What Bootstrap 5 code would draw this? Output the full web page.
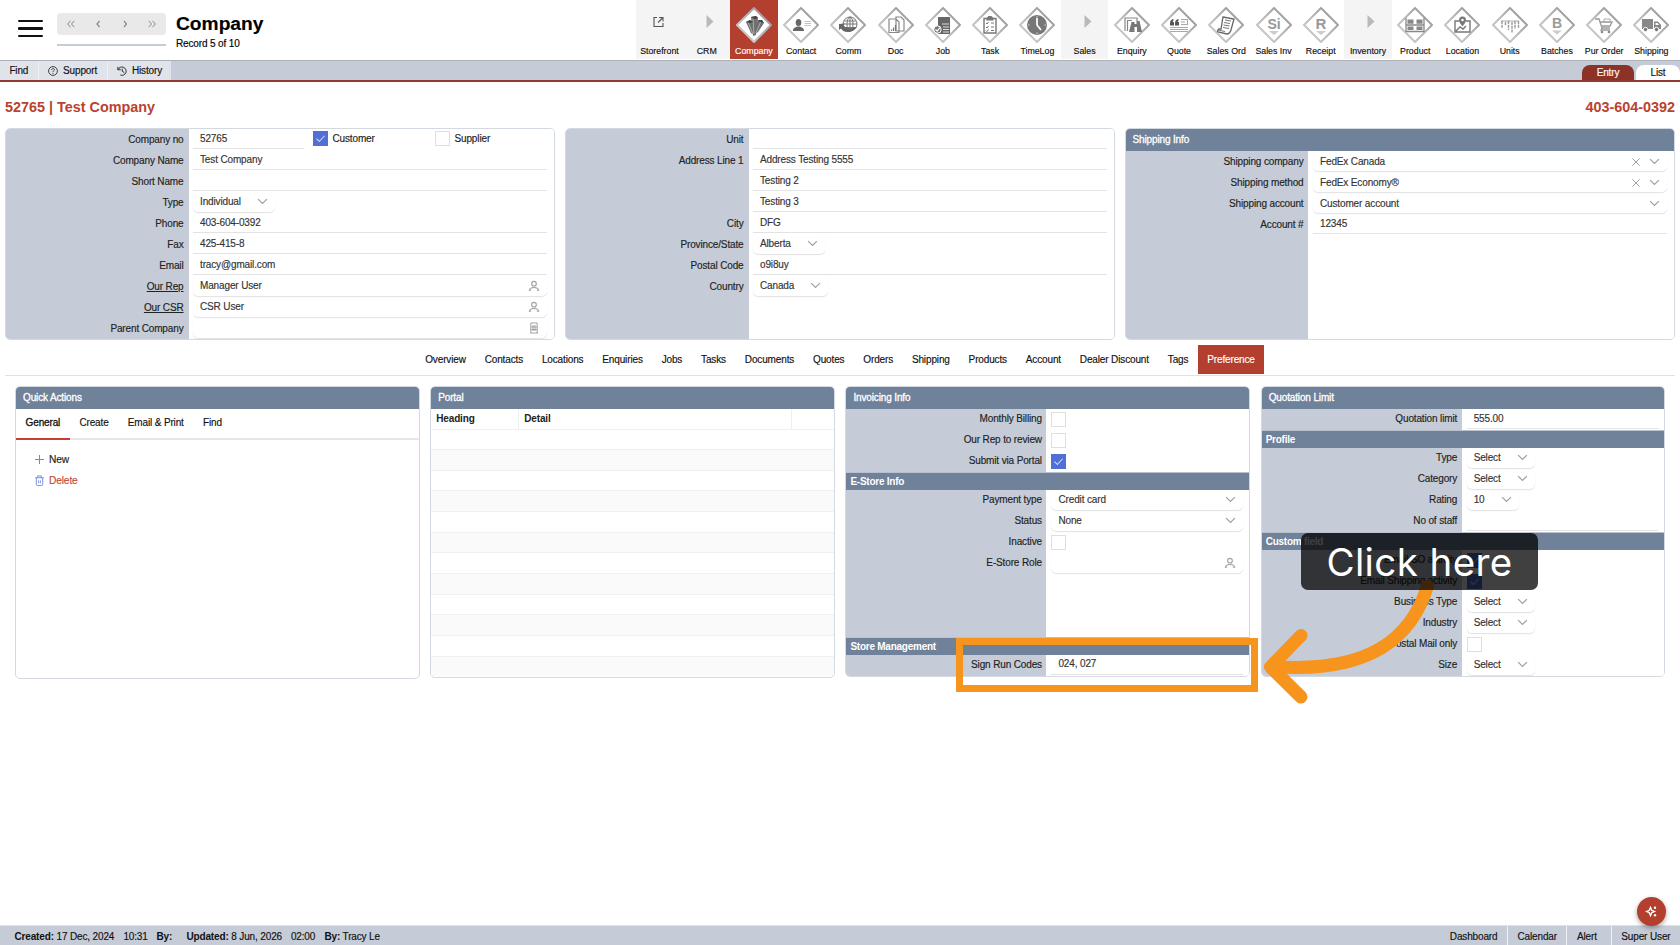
<!DOCTYPE html>
<html lang="en">
<head>
  <meta charset="UTF-8">
  <meta name="viewport" content="width=device-width, initial-scale=1">
  <title>Company - Test Company</title>
  <link href="https://cdn.jsdelivr.net/npm/bootstrap@5.3.0/dist/css/bootstrap.min.css" rel="stylesheet">
  <style>
    body { font-family: "Liberation Sans", Arial, sans-serif; font-size: 10px; line-height: 12px; letter-spacing: -.14px; color: #222; background: #fff; height: 945px; overflow: hidden; -webkit-text-stroke: .15px; }
    svg { display: block; flex: none; }
    a { color: inherit; text-decoration: none; }

    /* header */
    .topbar { height: 60px; padding-right: 5px; }
    .burger { width: 25px; height: 17px; margin: 20px 14px 0 18px; }
    .burger span { display: block; height: 2.4px; border-radius: 1px; background: #111; }
    .pager { width: 109px; margin-top: 13px; border-bottom: 2px solid #c5ccd7; height: 33px; }
    .pager div { height: 22px; background: #e9e9e9; border-radius: 4px; color: #888; }
    .page-name { margin: 12px 0 0 10px; color: #000; }
    .page-name h1 { font-size: 19.2px; line-height: 24px; font-weight: 700; letter-spacing: 0; margin: 0; }
    .page-name div { margin-top: 2px; }
    .mod { width: 47.24px; height: 59px; padding-top: 6px; font-size: 8.8px; letter-spacing: 0; color: #111; white-space: nowrap; }
    .mod span { line-height: 12px; padding-top: 1px; }
    .mod-group { background: #f4f4f4; }
    .mod-on { background: #b3402f; color: #fff; }
    .toolbar { height: 22px; background: #c5ccd7; border-top: 1px solid #adb0b5; border-bottom: 2px solid #913b2e; color: #111; }
    .tool { background: #e0e4ea; border-right: 1px solid #eef0f3; padding: 0 9.4px; gap: 5px; }
    .tool:last-child { border: 0; }
    .view-tab { width: 52px; height: 15px; border-radius: 8px 8px 0 0; background: #fff; margin-left: 2px; }
    .view-tab.on { background: #8d3226; color: #fff; }
    .view-tab.slim { width: 44px; }
    .record-title { height: 46px; padding: 3px 5px 0; font-size: 14.4px; line-height: 18px; font-weight: 700; letter-spacing: 0; color: #b9432f; -webkit-text-stroke: 0; }

    /* panels */
    .top-panels { padding: 0 5.5px 0 4.5px; gap: 10px; }
    .panel { flex: 1 1 0; min-width: 0; border: 1px solid #d3d9e1; border-radius: 5px; overflow: hidden; background: #fff; display: flex; flex-direction: column; }
    .top-panels .panel { height: 212px; --lw: 182.5px; }
    .bottom-panels { padding: 10px 14.5px 0 15px; gap: 10.4px; }
    .bottom-panels .panel { --lw: 200px; flex: 1 1 0; }
    .panel-head { height: 22px; flex: none; background: #70819a; color: #fff; padding: 5px 7px 0; -webkit-text-stroke: .3px #fff; margin: 0; font-size: 10px; line-height: 12px; font-weight: 400; }
    .section-head { height: 18px; flex: none; background: #70819a; color: #fff; font-weight: 700; padding: 3px 4px 0; border-top: 1px solid #b8c1cd; letter-spacing: -.25px; -webkit-text-stroke: 0; }
    .fields { background: linear-gradient(90deg, #c5ccd7 var(--lw), #fff var(--lw)); }
    .fields.grow { flex: 1 1 0; }
    .line { height: 21px; display: flex; }
    .line > label { width: var(--lw); text-align: right; padding: 5px 4.5px 0 0; flex: none; }
    .bottom-panels .line > label { padding-top: 4px; }
    .line > label.linked { text-decoration: underline; }
    .field { flex: 1; margin: 0 6.5px 1px 5px; border-bottom: 1px solid #e3e3e3; padding: 0 7px; display: flex; align-items: center; color: #333; padding-top: 1px; }
    .bottom-panels .field { padding-top: 0; padding-bottom: 1px; }
    .raise .field { padding-top: 0; padding-bottom: 0; }
    .raise .field.drop { padding-bottom: 1px; }
    .drop { border-radius: 5px; border-bottom: 0; box-shadow: 0 1px 1px rgba(0,0,0,.12); }
    .fit { flex: none; }
    .fit svg { margin-left: 16px; }
    .push { margin-left: auto; }
    .box { width: 15px; height: 15px; border: 1px solid #dfdfdf; background: #fff; margin: 3px 0 0 5px; flex: none; }
    .raise .box { margin-top: 2px; }
    .box.on { background: #5070d6; border-color: #5070d6; }
    .box.on::after { content: ""; display: block; width: 9px; height: 5px; margin: 3px 0 0 2px; border: solid #dfe6fb; border-width: 0 0 1px 1px; transform: rotate(-47deg) scale(.9); }
    .box-text { padding: 4px 0 0 4.5px; }
    .main-no { width: 111px; margin-right: 4px; }
    .customer-text { width: 107px; }

    .main-tabs { margin: 5px 5px 0; height: 31px; border-bottom: 1px solid #e2e2e2; color: #111; }
    .main-tabs a { height: 29px; line-height: 30px; padding: 0 9.45px; }
    .main-tabs a.on { background: #b3402f; color: #fff; }
    .qa-tabs { height: 31px; border-bottom: 2px solid #e6e6e6; color: #111; margin-bottom: 9px; }
    .qa-tabs a { height: 31px; padding: 8px 9.6px 0; }
    .qa-tabs a.on { border-bottom: 2px solid #c5402f; -webkit-text-stroke: .3px #111; }
    .qa-item { height: 21px; gap: 4px; padding-left: 18px; font-size: 10.2px; }
    .danger-text { color: #c24a3a; }
    .grid-row { height: 20.65px; border-top: 1px solid #f0f0f0; }
    .grid-row:nth-child(even) { background: #fafafa; }
    .grid-head { height: 19.5px; flex: none; font-weight: 700; color: #222; -webkit-text-stroke: 0; }
    .grid-head div { padding: 4px 5px 0; border-right: 1px solid #eee; }
    .col-heading { width: 88px; }
    .col-detail { width: 273px; }

    /* footer */
    .foot { height: 20px; background: #c5ccd7; border-top: 1px solid #dde1e7; color: #111; }
    .foot-info { padding: 5px 0 0 14.4px; }
    .foot-info b { -webkit-text-stroke: 0; }
    .foot-link { padding: 5px 9.5px 0 9.5px; border-left: 1px solid #eef0f3; }
    .bot-btn { right: 14px; bottom: 19px; width: 29px; height: 29px; border-radius: 50%; background: #b3402f; box-shadow: 0 2px 5px rgba(0,0,0,.35); z-index: 5; }

    /* tutorial overlay */
    .frame-mark { left: 956px; top: 637.5px; width: 302px; height: 54px; border: 7px solid #f7941d; z-index: 6; }
    .arrow-mark { left: 1238.5px; top: 569.5px; z-index: 6; }
    .hint { left: 1301px; top: 533px; width: 237px; height: 56.5px; border-radius: 7px; background: rgba(0,0,0,.75); color: #fff; font: 400 38.5px/58px Inter, sans-serif; letter-spacing: .4px; z-index: 7; white-space: nowrap; -webkit-text-stroke: 0; }
  </style>
</head>
<body class="d-flex flex-column position-relative">

<!-- Shared icons -->
<svg width="0" height="0" class="position-absolute">
  <defs>
    <linearGradient id="edge" x1="0" y1="1" x2="1" y2="0"><stop offset="0" stop-color="#d2d2d2"/><stop offset=".5" stop-color="#b8b8b8"/><stop offset="1" stop-color="#8c8c8c"/></linearGradient>
    <symbol id="down" viewBox="0 0 10 10"><path d="M1 2.800l4 4L9 2.800" fill="none" stroke="#a0a0a0" stroke-width="1.1"/></symbol>
    <symbol id="cross" viewBox="0 0 10 10"><path d="M1.300 1.300l7.400 7.400M8.700 1.300L1.300 8.700" fill="none" stroke="#a0a0a0" stroke-width="1"/></symbol>
    <symbol id="person" viewBox="0 0 12 12"><g fill="none" stroke="#a0a0a0" stroke-width="1.100"><circle cx="6" cy="3.700" r="2.300"/><path d="M1.200 10.800c.2-2.400 2-3.300 4.800-3.300s4.600.9 4.800 3.300M1 10.300h2.200M8.800 10.300H11"/></g></symbol>
    <symbol id="tower" viewBox="0 0 12 12"><path d="M2.800 11V1h6.400v10M2 11h8M5 3v6M7 3v6M3 5h6M3 7.500h6" fill="none" stroke="#999" stroke-width=".9"/></symbol>
  </defs>
</svg>

<!-- Header -->
<header class="topbar d-flex">
  <div class="burger d-flex flex-column justify-content-between"><span></span><span></span><span></span></div>
  <div class="pager">
    <div class="d-flex justify-content-around align-items-center">
      <svg width="10" height="10" viewBox="0 0 10 10" fill="none" stroke="#888"><path d="M4.500 1.800L1.700 5l2.800 3.200M8.300 1.800L5.500 5l2.800 3.200"/></svg>
      <svg width="10" height="10" viewBox="0 0 10 10" fill="none" stroke="#888" stroke-width="1.200"><path d="M6.500 2L4 5l2.500 3"/></svg>
      <svg width="10" height="10" viewBox="0 0 10 10" fill="none" stroke="#888" stroke-width="1.200"><path d="M4 2l2.500 3L4 8"/></svg>
      <svg width="10" height="10" viewBox="0 0 10 10" fill="none" stroke="#888"><path d="M1.700 1.800L4.500 5 1.700 8.200M5.500 1.800L8.300 5 5.500 8.200"/></svg>
    </div>
  </div>
  <div class="page-name"><h1>Company</h1><div>Record 5 of 10</div></div>
  <nav class="d-flex ms-auto" id="modules"></nav>
</header>

<!-- Toolbar -->
<div class="toolbar d-flex flex-shrink-0 justify-content-between">
  <div class="d-flex">
    <a class="tool d-flex align-items-center">Find</a>
    <a class="tool d-flex align-items-center">
      <svg width="10" height="10" viewBox="0 0 12 12" fill="none" stroke="#222"><circle cx="6" cy="6" r="5.300"/><path d="M4.300 4.800c0-2.300 3.400-2.200 3.400-.2C7.700 5.800 6 5.800 6 7.300M6 8.300v1.200"/></svg>Support</a>
    <a class="tool d-flex align-items-center">
      <svg width="10" height="10" viewBox="0 0 12 12" fill="none" stroke="#222" stroke-width="1.100"><path d="M1 1v3.500h3.500M1.300 4.300A5 5 0 1 1 4 10.800M6.300 3.200v3.200l2.400 1.400"/></svg>History</a>
  </div>
  <div class="d-flex align-items-end">
    <a class="view-tab on d-flex align-items-center justify-content-center">Entry</a>
    <a class="view-tab slim d-flex align-items-center justify-content-center">List</a>
  </div>
</div>

<div class="record-title d-flex flex-shrink-0 justify-content-between align-items-center"><span>52765 | Test Company</span><span>403-604-0392</span></div>

<!-- Company details -->
<div class="top-panels d-flex">
  <section class="panel">
    <div class="fields raise grow">
      <div class="line"><label>Company no</label><div class="field fit main-no">52765</div><div class="box on"></div><span class="box-text customer-text">Customer</span><div class="box ms-0"></div><span class="box-text">Supplier</span></div>
      <div class="line"><label>Company Name</label><div class="field">Test Company</div></div>
      <div class="line"><label>Short Name</label><div class="field"></div></div>
      <div class="line"><label>Type</label><div class="field drop fit">Individual<svg width="11" height="11"><use href="#down"/></svg></div></div>
      <div class="line"><label>Phone</label><div class="field">403-604-0392</div></div>
      <div class="line"><label>Fax</label><div class="field">425-415-8</div></div>
      <div class="line"><label>Email</label><div class="field">tracy@gmail.com</div></div>
      <div class="line"><label class="linked">Our Rep</label><div class="field drop">Manager User<svg class="push" width="12" height="12"><use href="#person"/></svg></div></div>
      <div class="line"><label class="linked">Our CSR</label><div class="field drop">CSR User<svg class="push" width="12" height="12"><use href="#person"/></svg></div></div>
      <div class="line"><label>Parent Company</label><div class="field drop"><svg class="push" width="12" height="12"><use href="#tower"/></svg></div></div>
    </div>
  </section>

  <section class="panel">
    <div class="fields raise grow">
      <div class="line"><label>Unit</label><div class="field"></div></div>
      <div class="line"><label>Address Line 1</label><div class="field">Address Testing 5555</div></div>
      <div class="line"><label></label><div class="field">Testing 2</div></div>
      <div class="line"><label></label><div class="field">Testing 3</div></div>
      <div class="line"><label>City</label><div class="field">DFG</div></div>
      <div class="line"><label>Province/State</label><div class="field drop fit">Alberta<svg width="11" height="11"><use href="#down"/></svg></div></div>
      <div class="line"><label>Postal Code</label><div class="field">o9i8uy</div></div>
      <div class="line"><label>Country</label><div class="field drop fit">Canada<svg width="11" height="11"><use href="#down"/></svg></div></div>
    </div>
  </section>

  <section class="panel">
    <h2 class="panel-head">Shipping Info</h2>
    <div class="fields grow">
      <div class="line"><label>Shipping company</label><div class="field drop">FedEx Canada<svg class="push" width="10" height="10"><use href="#cross"/></svg><svg class="ms-2" width="11" height="11"><use href="#down"/></svg></div></div>
      <div class="line"><label>Shipping method</label><div class="field drop">FedEx Economy®<svg class="push" width="10" height="10"><use href="#cross"/></svg><svg class="ms-2" width="11" height="11"><use href="#down"/></svg></div></div>
      <div class="line"><label>Shipping account</label><div class="field drop">Customer account<svg class="push" width="11" height="11"><use href="#down"/></svg></div></div>
      <div class="line"><label>Account #</label><div class="field">12345</div></div>
    </div>
  </section>
</div>

<!-- Section tabs -->
<nav class="main-tabs d-flex flex-shrink-0 justify-content-center">
  <a>Overview</a><a>Contacts</a><a>Locations</a><a>Enquiries</a><a>Jobs</a><a>Tasks</a><a>Documents</a><a>Quotes</a><a>Orders</a><a>Shipping</a><a>Products</a><a>Account</a><a>Dealer Discount</a><a>Tags</a><a class="on">Preference</a>
</nav>

<!-- Preference tab -->
<div class="bottom-panels d-flex align-items-start">
  <section class="panel" style="height:293px">
    <h2 class="panel-head">Quick Actions</h2>
    <div class="qa-tabs d-flex"><a class="on">General</a><a>Create</a><a>Email &amp; Print</a><a>Find</a></div>
    <a class="qa-item d-flex align-items-center"><svg width="11" height="11" viewBox="0 0 11 11" stroke="#7088dd"><path d="M5.500 1v9M1 5.500h9"/></svg>New</a>
    <a class="qa-item d-flex align-items-center danger-text"><svg width="11" height="11" viewBox="0 0 11 12" fill="none" stroke="#7088dd"><path d="M.8 3h9.400M3.500 3V1h4v2M2 3v7.200c0 .8.300 1.200 1 1.200h5c.7 0 1-.4 1-1.200V3M4.500 6v3M6.500 6v3"/></svg>Delete</a>
  </section>

  <section class="panel" style="height:292px">
    <h2 class="panel-head">Portal</h2>
    <div class="grid-head d-flex"><div class="col-heading">Heading</div><div class="col-detail">Detail</div></div>
    <div id="portal-rows"></div>
  </section>

  <section class="panel" style="height:291px">
    <h2 class="panel-head">Invoicing Info</h2>
    <div class="fields">
      <div class="line"><label>Monthly Billing</label><div class="box"></div></div>
      <div class="line"><label>Our Rep to review</label><div class="box"></div></div>
      <div class="line"><label>Submit via Portal</label><div class="box on"></div></div>
    </div>
    <div class="section-head">E-Store Info</div>
    <div class="fields grow">
      <div class="line"><label>Payment type</label><div class="field drop">Credit card<svg class="push" width="11" height="11"><use href="#down"/></svg></div></div>
      <div class="line"><label>Status</label><div class="field drop">None<svg class="push" width="11" height="11"><use href="#down"/></svg></div></div>
      <div class="line"><label>Inactive</label><div class="box"></div></div>
      <div class="line"><label>E-Store Role</label><div class="field drop"><svg class="push" width="12" height="12"><use href="#person"/></svg></div></div>
    </div>
    <div class="section-head">Store Management</div>
    <div class="fields">
      <div class="line"><label>Sign Run Codes</label><div class="field">024, 027</div></div>
    </div>
  </section>

  <section class="panel" style="height:291px">
    <h2 class="panel-head">Quotation Limit</h2>
    <div class="fields raise">
      <div class="line"><label>Quotation limit</label><div class="field">555.00</div></div>
    </div>
    <div class="section-head">Profile</div>
    <div class="fields">
      <div class="line"><label>Type</label><div class="field drop fit">Select<svg width="11" height="11"><use href="#down"/></svg></div></div>
      <div class="line"><label>Category</label><div class="field drop fit">Select<svg width="11" height="11"><use href="#down"/></svg></div></div>
      <div class="line"><label>Rating</label><div class="field drop fit">10<svg width="11" height="11"><use href="#down"/></svg></div></div>
      <div class="line"><label>No of staff</label><div class="field"></div></div>
    </div>
    <div class="section-head">Custom field</div>
    <div class="fields grow">
      <div class="line"><label>Email SO activity</label><div class="box on"></div></div>
      <div class="line"><label>Email Shipping activity</label><div class="box on"></div></div>
      <div class="line"><label>Business Type</label><div class="field drop fit">Select<svg width="11" height="11"><use href="#down"/></svg></div></div>
      <div class="line"><label>Industry</label><div class="field drop fit">Select<svg width="11" height="11"><use href="#down"/></svg></div></div>
      <div class="line"><label>Postal Mail only</label><div class="box"></div></div>
      <div class="line"><label>Size</label><div class="field drop fit">Select<svg width="11" height="11"><use href="#down"/></svg></div></div>
    </div>
  </section>
</div>

<!-- Footer -->
<footer class="foot d-flex mt-auto justify-content-between">
  <div class="d-flex foot-info">
    <span style="width:109px"><b>Created:</b> 17 Dec, 2024</span><span style="width:33px">10:31</span><b style="width:30px">By:</b>
    <span style="width:104.500px"><b>Updated:</b> 8 Jun, 2026</span><span style="width:33.500px">02:00</span><span><b>By:</b> Tracy Le</span>
  </div>
  <div class="d-flex">
    <a class="foot-link border-0">Dashboard</a><a class="foot-link">Calendar</a><a class="foot-link" style="padding-right:14px">Alert</a><a class="foot-link">Super User</a>
  </div>
</footer>
<div class="bot-btn position-absolute d-flex align-items-center justify-content-center">
  <svg width="13" height="13" viewBox="0 0 13 13"><path d="M5.500 2.500l1.200 2.800 2.800 1.200-2.800 1.200-1.200 2.800-1.200-2.800L1.500 6.500l2.800-1.200z" fill="none" stroke="#fff" stroke-width="1.400"/><circle cx="10" cy="2.700" r="1.200" fill="#fff"/><circle cx="10" cy="10.300" r="1.200" fill="#fff"/></svg>
</div>

<!-- Tutorial callout -->
<div class="frame-mark position-absolute"></div>
<svg class="arrow-mark position-absolute" width="210" height="140" viewBox="0 0 210 140" fill="none" stroke="#f7941d" stroke-width="13" stroke-linecap="round" stroke-linejoin="round">
  <path d="M188.500 16C173 67 132 104 33 96.500"/><path d="M62 65.500L31.500 97l30.500 30"/>
</svg>
<div class="hint position-absolute text-center">Click here</div>

<script src="https://cdn.jsdelivr.net/npm/bootstrap@5.3.0/dist/js/bootstrap.bundle.min.js"></script>
<script>
// name, drawing inside the diamond (origin is its centre)
const modules = [
  ['Storefront', 'link'],
  ['CRM', 'group'],
  ['Company', '<path d="M-8-3l4-2 3 2 1 13-3-2zM-3-8l5-1 2 2-2 17-3 1zM4-5l4 0 2 3-6 9-3 2z" fill="#6f6f6f"/><path d="M-6-3L-1 9M-1-7l1 16M7-4L2 8" stroke="#bbb" stroke-width=".8"/><path d="M-8-3l4-2 3 2-3 1zM-3-8l5-1 2 2-4 1zM4-5h4l2 3-4-1z" fill="#444"/>'],
  ['Contact', '<ellipse cx="-2.500" cy="-2.500" rx="2.800" ry="3.500" fill="#666"/><path d="M-8 6c0-3.500 2-3 4-4.500h3c2 1.500 4 1 4 4.500z" fill="#666"/><path d="M3.500-3.500H10M3.500-1.500H10M3.500.5H10" stroke="#c4c4c4"/>'],
  ['Comm', '<g fill="none" stroke="#777"><circle cx="2" cy="-1" r="7"/><ellipse cx="2" cy="-1" rx="3" ry="7"/><path d="M-4-4H8M-5-1H9M-4 2.500H8M2-8V6"/></g><path d="M-9-1l6-.5-1.500 2C-1 4 5 4 9 1 6 8-4 9-7 3.500L-9 5z" fill="#666"/>'],
  ['Doc', '<g fill="#fff" stroke="#888" stroke-width="1.200"><path d="M0-8h5l3 3V6H0zM-7-6h7l3 3V7.500H-7z"/></g><path d="M-4.500 6V4.500M-2.500 6V2.500M-.5 6V0" stroke="#777" stroke-width="1.200"/>'],
  ['Job', '<path d="M-5-8H7V9H-5z" fill="#666"/><path d="M-1-1h7M0 2h6M0 4.500h6M0 7h6" stroke="#ddd"/><circle cx="-5.500" cy="4.500" r="3.700" fill="#777" stroke="#fff"/><path d="M-7.500 4.500l1.700 1.700L-3 2.700" fill="none" stroke="#fff" stroke-width="1.200"/>'],
  ['Task', '<path d="M-6-6.500H6V8H-6z" fill="#fff" stroke="#777" stroke-width="1.400"/><path d="M-3.500-7l2-2h3l2 2v2.500h-7z" fill="#777"/><path d="M-4-2l1 1 1.500-2M-4 2l1 1L-1.500 1M-4 5.500l1 1 1.500-2M1-2h3M1 2h3M1 5.500h3" fill="none" stroke="#777"/>'],
  ['TimeLog', '<circle r="10" fill="#777"/><path d="M0-7V0l4 5" fill="none" stroke="#fff" stroke-width="1.700"/><path d="M0-9v1.500M9 0H7.500M-9 0h1.500M0 9V7.500" stroke="#ddd"/>'],
  ['Sales', 'group'],
  ['Enquiry', '<path d="M-7 6V-7H5v3M-4.500 6V-4.500H0" fill="none" stroke="#888" stroke-width="1.200"/><path d="M-3 7L-.5-3h3v2h2v-3h3L10 7H5V2H2.500v5z" fill="#777"/>'],
  ['Quote', '<path d="M-9-1.500c0-2.500 1-4 3.500-4.500v1.500l-1 1.500h1.500V.5H-9zM-4-1.500c0-2.500 1-4 3.500-4.500v1.500l-1 1.500H0V.5h-4z" fill="#555"/><path d="M2-5.500h6.500V0M2-3h4M2-.5h7M-9 2.500H9M-9 4.500H9M-9 6.500H9" fill="none" stroke="#aaa" stroke-width="1.100"/>'],
  ['Sales Ord', '<path d="M-3-8L8-6 5 5c-1 3-2 4-4 4L-8 7c-1-1 0-3 1-3h2z" fill="#fff" stroke="#666" stroke-width="1.300"/><path d="M-1-5l6 1M-2-2.500l6 1M-2.500 0l6 1M-3 2.500l6 1M-8 5l7 1.500" stroke="#777"/>'],
  ['Sales Inv', '<text text-anchor="middle" y="3.500" font-size="14" font-weight="700" fill="#999">Si</text><path d="M-5 6H5L0 10z" fill="#ccc"/>'],
  ['Receipt', '<text text-anchor="middle" y="3.500" font-size="15" font-weight="700" fill="#999">R</text><path d="M-5 6H5L0 10z" fill="#ccc"/>'],
  ['Inventory', 'group'],
  ['Product', '<path d="M-9-7V7M9-7V7M-9 0H9M-9 6.500H9" stroke="#888" stroke-width="1.300"/><path d="M-7.500-5.500h6v4.300h-6zM1.500-5.500h6v4.300h-6zM-7.500 1.500h6V5h-6zM1.500 1.500h6V5h-6z" fill="#888"/>'],
  ['Location', '<path d="M-3-4h-4V7H8V-4H4M-6 6l4-4 3 2 3-3" fill="none" stroke="#777" stroke-width="1.400"/><path d="M.5 1.500C-2-2-3-3-3-5a3.500 3.500 0 0 1 7 0c0 2-1 3-3.500 6.500z" fill="#777"/><circle cx=".5" cy="-5" r="1.300" fill="#fff"/>'],
  ['Units', '<path d="M-9-4H9" stroke="#aaa"/><path d="M-8-4v7M-4.500-3v4M-1.500-4v9M2-3V8M5-4v8M8.500-4v7" stroke="#999" stroke-width="1.400" stroke-dasharray="3 .8"/>'],
  ['Batches', '<text text-anchor="middle" y="3" font-size="14" font-weight="700" fill="#999">B</text><path d="M-5 5.500H5L0 9.500z" fill="#ccc"/>'],
  ['Pur Order', '<path d="M-9-6h4l3 9h8M-4-3H8L6 1h-8M-2 3l-1 2h9" fill="none" stroke="#999" stroke-width="1.300"/><path d="M0-6h6v3H0z" fill="none" stroke="#aaa"/><circle cx="-2" cy="7" r="1.300" fill="#888"/><circle cx="5" cy="7" r="1.300" fill="#888"/>'],
  ['Shipping', '<path d="M-9-6H2V4H-9zM3-3.500h4l3 3.500v4H3z" fill="#888"/><path d="M4.500-2h2L8 0H4.500z" fill="#fff"/><g fill="#777" stroke="#fff"><circle cx="-5.500" cy="4.500" r="2.200"/><circle cx="5.500" cy="4.500" r="2.200"/></g>']
];

function moduleIcon(art) {
  if (art === 'group') return '<path d="M-.5-10L6.500-3.500-.5 3z" fill="#b9b9b9"/>';
  if (art === 'link') return '<path d="M-2-7.500h-3v9h9v-3.500M0-7.500h4v4M4-7.500L-1-2.500" fill="none" stroke="#555" stroke-width="1.100"/>';
  return `<path d="M0-17L17 0 0 17-17 0z" fill="#fff" stroke="url(#edge)" stroke-width="2" stroke-linejoin="round"/>${art}`;
}

document.getElementById('modules').innerHTML = modules.map(([name, art]) => {
  let cls = 'mod d-flex flex-column align-items-center';
  if (art === 'group' || art === 'link') cls += ' mod-group';
  if (name === 'Company') cls += ' mod-on';
  return `<a class="${cls}"><svg width="38" height="38" viewBox="-19 -19 38 38">${moduleIcon(art)}</svg><span>${name}</span></a>`;
}).join('');

// empty portal list
document.getElementById('portal-rows').innerHTML = '<div class="grid-row"></div>'.repeat(12);
</script>
</body>
</html>
